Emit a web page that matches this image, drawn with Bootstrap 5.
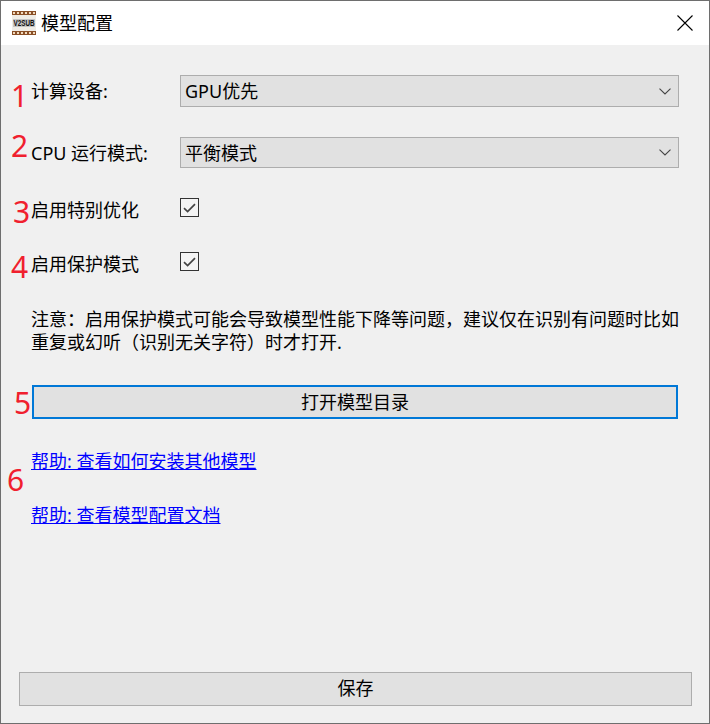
<!DOCTYPE html>
<html lang="zh-CN">
<head>
    <meta charset="UTF-8">
    <meta name="viewport" content="width=device-width, initial-scale=1.0">
    <title>模型配置</title>
    <link href="https://cdn.jsdelivr.net/npm/bootstrap@5.3.0/dist/css/bootstrap.min.css" rel="stylesheet">
    <style>
        html, body { height: 100%; }
        body {
            margin: 0;
            background: #f0f0f0;
            color: #000;
            font-family: "Noto Sans", "Noto Sans CJK SC", sans-serif;
            font-size: 18px;
            line-height: 24px;
        }
        .app-window {
            height: 724px;
            border: 1px solid #6e6e6e;
            background: #f0f0f0;
            overflow: hidden;
        }
        .title-bar {
            height: 44px;
            background: #fff;
            padding: 0 16px 0 11px;
        }
        .title-text { margin-left: 5px; }
        .close-x { display: block; }
        .form-area {
            position: relative;
            padding: 30px 30px 0;
        }
        .field-row { margin-bottom: 30px; }
        .field-row.check-row { margin-bottom: 35px; height: 19px; }
        .field-label { width: 149px; flex: none; }
        .check-row .field-label { padding-top: 4px; }
        .app-select.form-select {
            height: 32px;
            padding: 0 30px 0 4px;
            font-size: 18px;
            line-height: 24px;
            color: #000;
            background-color: #e1e1e1;
            border: 1px solid #adadad;
            border-radius: 0;
            background-size: 12px 7px;
            background-position: right 7px center;
            background-image: url("data:image/svg+xml,%3csvg xmlns='http://www.w3.org/2000/svg' viewBox='0 0 12 7'%3e%3cpath fill='none' stroke='%23444' stroke-width='1.1' d='M.5.7 6 6 11.5.7'/%3e%3c/svg%3e");
        }
        .app-select.short { height: 31px; }
        .app-check.form-check-input {
            width: 19px;
            height: 19px;
            margin: 0;
            border: 1px solid #333;
            border-radius: 0;
            background-color: #f4f4f4;
            background-size: 13px 10px;
            background-image: url("data:image/svg+xml,%3csvg xmlns='http://www.w3.org/2000/svg' viewBox='0 0 13 10'%3e%3cpath fill='none' stroke='%23444' stroke-width='1.7' d='M1 5.2 4.6 8.6 12 1.2'/%3e%3c/svg%3e");
        }
        .note-text { margin: 0 0 31px; padding-top: 2px; line-height: 23px; white-space: nowrap; }
        .app-btn.btn {
            display: block;
            font-size: 18px;
            line-height: 24px;
            color: #000;
            background: #e1e1e1;
            border-radius: 0;
            padding: 0;
        }
        .open-btn.btn {
            width: 646px;
            height: 34px;
            margin: 0 1px 30px;
            border: 2px solid #0078d7;
        }
        .help-link {
            display: block;
            width: fit-content;
            color: #0000ff;
            text-decoration: underline;
            margin-bottom: 30px;
        }
        .save-area { padding: 0 17px 17px 18px; }
        .save-btn.btn {
            width: 100%;
            height: 34px;
            padding-bottom: 2px;
            border: 1px solid #adadad;
        }
        .mark-num {
            position: absolute;
            color: #f0202e;
            font-family: "Noto Sans", sans-serif;
            font-size: 30px;
            line-height: 30px;
        }
        .mark-1 { left: 10px; top: 36px; }
        .mark-2 { left: 10px; top: 86px; }
        .mark-3 { left: 12px; top: 152px; }
        .mark-4 { left: 10px; top: 207px; }
        .mark-5 { left: 13px; top: 343px; }
        .mark-6 { left: 6px; top: 420px; }
    </style>
</head>
<body>
    <div class="app-window d-flex flex-column">
        <!-- Title bar -->
        <div class="title-bar d-flex align-items-center">
            <svg width="24" height="24" viewBox="0 0 24 24" aria-hidden="true">
                <rect width="24" height="24" fill="#8a4f26"/>
                <rect y="4" width="24" height="16" fill="#efece6"/>
                <rect x="1" y="8" width="22" height="8" fill="#c4c4c4"/>
                <path d="M1 1h2v2H1zM5 1h2v2H5zM9 1h2v2H9zM13 1h2v2h-2zM17 1h2v2h-2zM21 1h2v2h-2zM1 21h2v2H1zM5 21h2v2H5zM9 21h2v2H9zM13 21h2v2h-2zM17 21h2v2h-2zM21 21h2v2h-2z" fill="#f0d9bd"/>
                <text transform="scale(1 1.3)" x="12" y="11.6" text-anchor="middle" font-family="Liberation Sans, sans-serif" font-size="6.3" font-weight="700" fill="#111">V2SUB</text>
            </svg>
            <span class="title-text flex-grow-1">模型配置</span>
            <svg class="close-x" width="16" height="16" viewBox="0 0 16 16" aria-label="关闭">
                <path d="M.5.5l15 15M15.5.5l-15 15" stroke="#000" stroke-width="1.1" fill="none"/>
            </svg>
        </div>

        <!-- Form -->
        <div class="form-area flex-grow-1">
            <span class="mark-num mark-1">1</span>
            <span class="mark-num mark-2">2</span>
            <span class="mark-num mark-3">3</span>
            <span class="mark-num mark-4">4</span>
            <span class="mark-num mark-5">5</span>
            <span class="mark-num mark-6">6</span>

            <div class="field-row d-flex align-items-center">
                <label class="field-label" for="device">计算设备:</label>
                <select id="device" class="form-select app-select">
                    <option>GPU优先</option>
                </select>
            </div>
            <div class="field-row d-flex align-items-center">
                <label class="field-label" for="cpuMode">CPU 运行模式:</label>
                <select id="cpuMode" class="form-select app-select short">
                    <option>平衡模式</option>
                </select>
            </div>
            <div class="field-row check-row d-flex align-items-center">
                <label class="field-label" for="optimize">启用特别优化</label>
                <input id="optimize" class="form-check-input app-check" type="checkbox" checked>
            </div>
            <div class="field-row check-row d-flex align-items-center">
                <label class="field-label" for="protect">启用保护模式</label>
                <input id="protect" class="form-check-input app-check" type="checkbox" checked>
            </div>

            <p class="note-text">注意：启用保护模式可能会导致模型性能下降等问题，建议仅在识别有问题时比如<br>重复或幻听（识别无关字符）时才打开.</p>

            <button type="button" class="btn app-btn open-btn">打开模型目录</button>

            <a class="help-link" href="#">帮助: 查看如何安装其他模型</a>
            <a class="help-link" href="#">帮助: 查看模型配置文档</a>
        </div>

        <!-- Save -->
        <div class="save-area">
            <button type="button" class="btn app-btn save-btn">保存</button>
        </div>
    </div>
    <script src="https://cdn.jsdelivr.net/npm/bootstrap@5.3.0/dist/js/bootstrap.bundle.min.js"></script>
</body>
</html>
